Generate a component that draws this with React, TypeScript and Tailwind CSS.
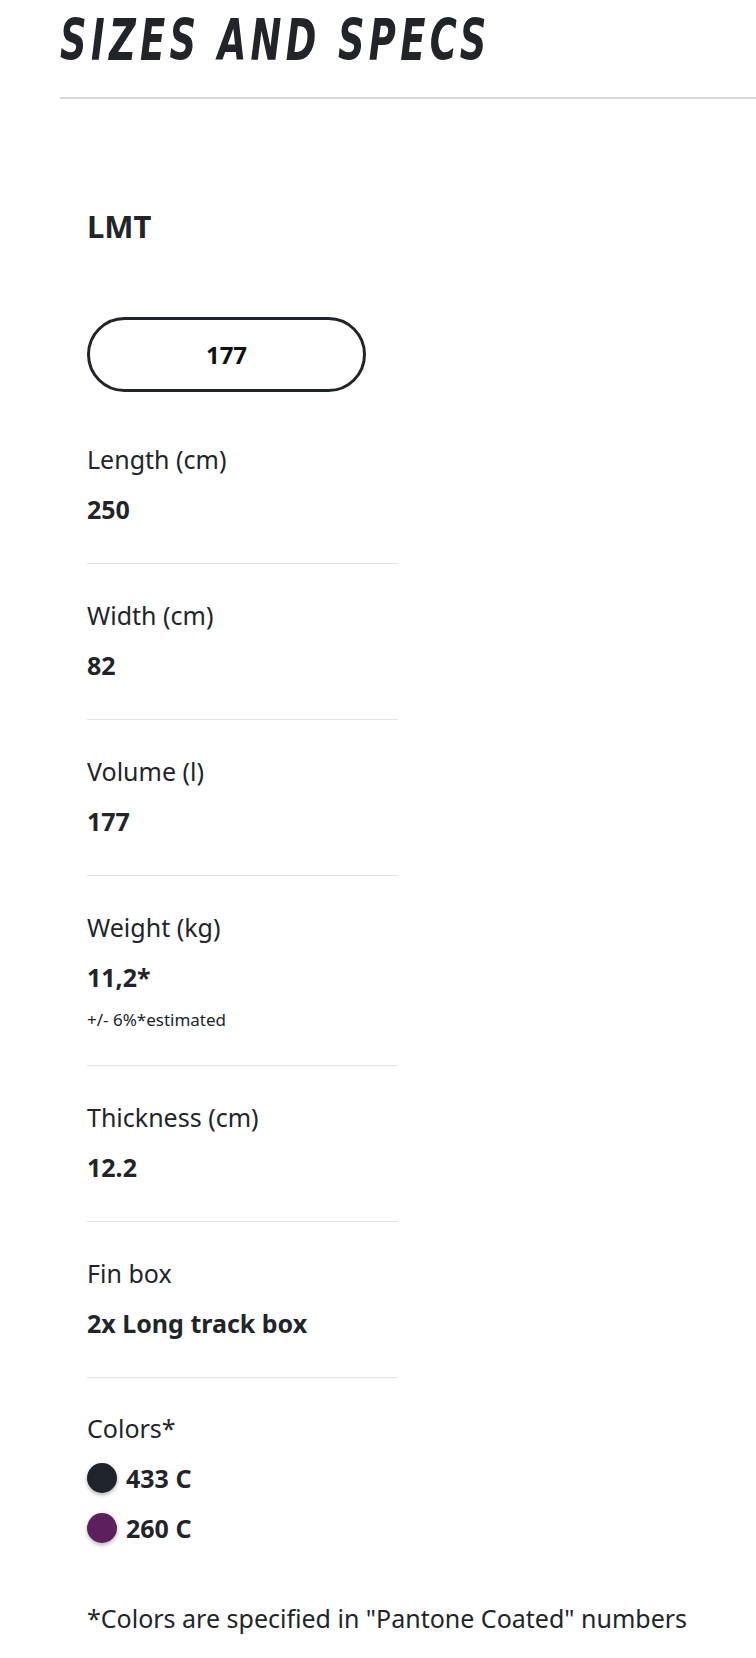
const specs = [
  { label: "Length (cm)", value: "250" },
  { label: "Width (cm)", value: "82" },
  { label: "Volume (l)", value: "177" },
  { label: "Weight (kg)", value: "11,2*", note: "+/- 6%*estimated" },
  { label: "Thickness (cm)", value: "12.2" },
  { label: "Fin box", value: "2x Long track box" },
];

const colors = [
  { name: "433 C", swatch: "bg-[#1f242b]" },
  { name: "260 C", swatch: "bg-[#5e1f5e]" },
];

const App = () => {
  return (
    <div className="min-h-screen bg-white text-[#212529] font-['Noto_Sans',sans-serif]">
      <div className="pl-[60px]">
        <div className="border-b-2 border-[#d6d6d6] pb-[17px]">
          <h2 className="inline-block origin-left scale-x-[0.72] text-[57px] leading-[80px] font-bold italic tracking-[6px] uppercase font-['DejaVu_Sans_Condensed','DejaVu_Sans',sans-serif] whitespace-nowrap">
            Sizes and Specs
          </h2>
        </div>

        <div className="pl-[27px]">
          <h3 className="mt-[107px] text-[31px] leading-[40px] font-bold">LMT</h3>

          <button className="mt-[71px] flex h-[75px] w-[279px] items-center justify-center rounded-full border-[3px] border-[#212529] text-[24px] font-bold text-[#111]">
            177
          </button>

          <div className="mt-[16px] w-[311px]">
            {specs.map((item) => (
              <div key={item.label} className="border-b border-[#e3e3e3] pt-[33px] pb-[36px]">
                <div className="text-[25px] leading-[36px]">{item.label}</div>
                <div className="mt-[14px] text-[25px] leading-[36px] font-bold">{item.value}</div>
                {item.note && <div className="mt-[13px] -mb-[3px] text-[17px] leading-[24px]">{item.note}</div>}
              </div>
            ))}

            <div className="pt-[32px]">
              <div className="text-[25px] leading-[36px]">Colors*</div>
              {colors.map((c) => (
                <div key={c.name} className="mt-[14px] flex items-center gap-[9px]">
                  <span className={`h-[30px] w-[30px] rounded-full shadow-[0_2px_4px_rgba(0,0,0,0.3)] ${c.swatch}`}></span>
                  <span className="text-[25px] leading-[36px] font-bold">{c.name}</span>
                </div>
              ))}
            </div>
          </div>

          <p className="mt-[54px] whitespace-nowrap text-[25px] leading-[36px]">
            *Colors are specified in "Pantone Coated" numbers
          </p>
        </div>
      </div>
    </div>
  );
};

export default App;
